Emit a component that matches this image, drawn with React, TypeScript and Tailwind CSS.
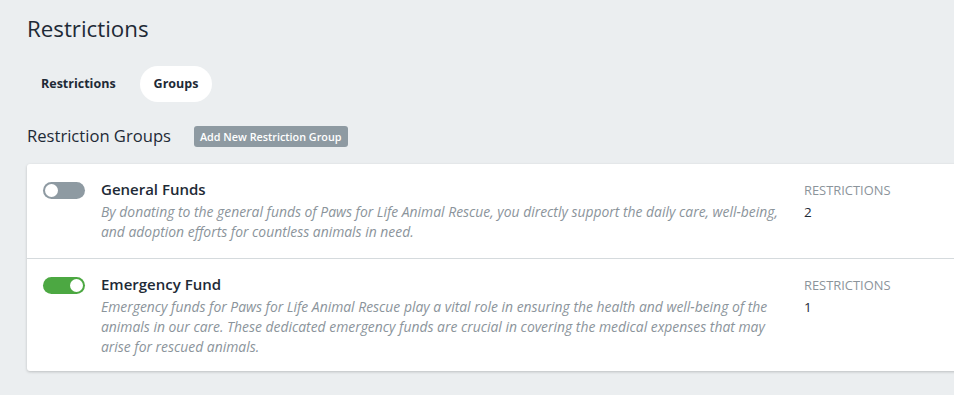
import React from "react";

const font = { fontFamily: "'Open Sans', 'Liberation Sans', sans-serif" };

function Toggle({ on }: { on: boolean }) {
  return (
    <div
      className={`mt-[3px] flex h-[17px] w-[42px] shrink-0 items-center rounded-full px-[2px] ${
        on ? "justify-end bg-[#4ca842]" : "justify-start bg-[#8e9aa2]"
      }`}
    >
      <div className="h-[13px] w-[13px] rounded-full bg-white" />
    </div>
  );
}

function Row({
  on,
  title,
  desc,
  count,
  last,
}: {
  on: boolean;
  title: string;
  desc: string;
  count: number;
  last?: boolean;
}) {
  return (
    <div
      className={`flex items-start pl-4 pt-[15px] ${
        last ? "pb-[14px]" : "pb-[16px] border-b border-[#d5dadd]"
      }`}
    >
      <Toggle on={on} />
      <div className="ml-4 w-[690px]">
        <div className="mb-[2px] text-[15px] font-semibold leading-[21px] text-[#1e2a36]">{title}</div>
        <div className="text-[13.9px] italic leading-[20px] text-[#8b949b]">{desc}</div>
      </div>
      <div className="ml-[13px]">
        <div className="mt-[1px] text-[12.9px] uppercase leading-[21px] text-[#8b949b]">Restrictions</div>
        <div className="mt-[1px] text-[13.5px] leading-[20px] text-[#1e2a36]">{count}</div>
      </div>
    </div>
  );
}

export default function App() {
  return (
    <div className="h-[395px] w-full overflow-hidden bg-[#ebeef0] pl-[27px] pt-[14px]" style={font}>
      <h1 className="text-[22.3px] leading-[30px] text-[#1e2a36]">Restrictions</h1>
      <div className="mt-[22px] flex items-center">
        <div className="flex h-[36px] items-center rounded-full px-[14px] text-[12.5px] font-bold text-[#1e2a36]">
          Restrictions
        </div>
        <div className="ml-[10px] flex h-[36px] items-center rounded-full bg-white px-[14px] text-[12.5px] font-bold text-[#1e2a36]">
          Groups
        </div>
      </div>
      <div className="mt-[22px] flex items-center">
        <h2 className="text-[16.6px] leading-[24px] text-[#1e2a36]">Restriction Groups</h2>
        <button className="ml-[23px] h-[21px] rounded-[3px] bg-[#8e9aa2] px-[6px] text-[10.8px] font-semibold leading-[21px] text-white">
          Add New Restriction Group
        </button>
      </div>
      <div className="mt-[16px] w-[960px] rounded-[3px] bg-white shadow-[0_1px_3px_rgba(0,0,0,0.2)]">
        <Row
          on={false}
          title="General Funds"
          desc="By donating to the general funds of Paws for Life Animal Rescue, you directly support the daily care, well-being, and adoption efforts for countless animals in need."
          count={2}
        />
        <Row
          on={true}
          title="Emergency Fund"
          desc="Emergency funds for Paws for Life Animal Rescue play a vital role in ensuring the health and well-being of the animals in our care. These dedicated emergency funds are crucial in covering the medical expenses that may arise for rescued animals."
          count={1}
          last
        />
      </div>
    </div>
  );
}
